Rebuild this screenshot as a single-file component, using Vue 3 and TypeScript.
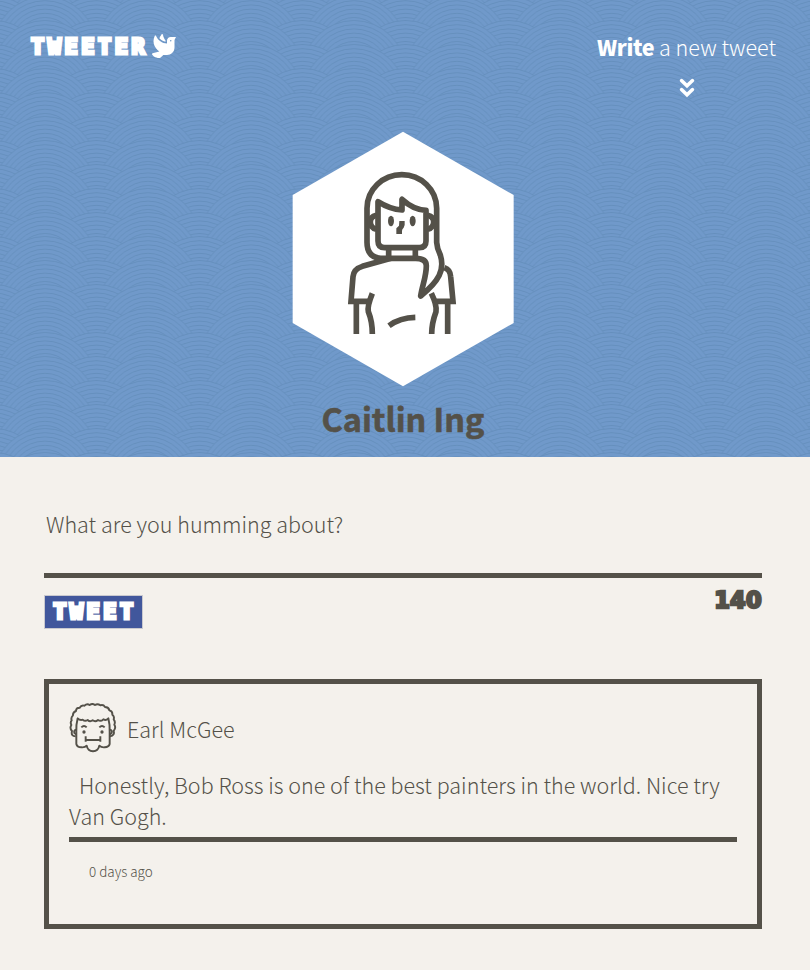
<script setup lang="ts">
import { ref, computed } from 'vue'

interface Tweet {
  author: string
  content: string
  age: string
}

const LIMIT = 140
const draft = ref<string>('')
const remaining = computed<number>(() => LIMIT - draft.value.length)
const tweets: Tweet[] = [
  {
    author: 'Earl McGee',
    content: 'Honestly, Bob Ross is one of the best painters in the world. Nice try Van Gogh.',
    age: '0 days ago',
  },
]

const PERIOD_X = 103
const PERIOD_Y = 24
const RINGS: number[] = [51.5, 47.3, 43.1, 38.9, 34.7, 30.5]

interface Arch {
  cx: number
  cy: number
}

const arches: Arch[] = []
for (let row = -1; row < 5; row++) {
  const cy = row * PERIOD_Y
  arches.push({ cx: 0, cy }, { cx: PERIOD_X, cy })
  arches.push({ cx: PERIOD_X / 2, cy })
}
</script>

<template>
  <div class="page">
    <header class="hero">
      <svg class="waves" width="100%" height="100%" aria-hidden="true">
        <defs>
          <pattern id="waves" x="-6.5" y="0" :width="PERIOD_X" :height="PERIOD_Y" patternUnits="userSpaceOnUse">
            <g v-for="(a, i) in arches" :key="i">
              <circle v-for="r in RINGS" :key="r" :cx="a.cx" :cy="a.cy" :r="r" />
            </g>
          </pattern>
        </defs>
        <rect width="100%" height="100%" fill="url(#waves)" />
      </svg>
      <nav class="nav">
        <div class="brand">
          <span class="brand-name">TWEETER</span>
          <svg class="dove" viewBox="0 0 512 512">
            <path d="M288 167.2v-28.1c-28.2-36.3-47.1-79.3-54.1-125.2-2.1-13.5-19-18.8-27.8-8.3-21.1 24.9-37.7 54.1-48.9 86.5 34.2 38.3 80 64.6 130.8 75.1zM400 64c-44.2 0-80 35.9-80 80.1v59.4C215.6 197.3 127 133 87 41.8c-5.5-12.5-23.2-13.2-29-.9C41.4 76 32 115.2 32 156.6c0 70.8 34.1 136.9 85.1 185.9 13.2 12.7 26.1 23.2 38.9 32.8l-143.9 36C1.4 414-3.4 426.4 2.6 435.7 20 462.6 63 508.2 155.8 512c8 .3 16-2.6 22.1-7.9l65.2-56.1H320c88.4 0 160-71.5 160-159.9V128l32-64H400zm0 96.1c-8.8 0-16-7.2-16-16s7.2-16 16-16 16 7.2 16 16-7.2 16-16 16z" />
          </svg>
        </div>
        <div class="compose-link">
          <span class="compose-text"><b>Write</b> a new tweet</span>
          <svg class="chevrons" viewBox="0 0 18 20">
            <path d="M3.5 2.6 9 7.8l5.5-5.2M3.5 11.6 9 16.8l5.5-5.2" />
          </svg>
        </div>
      </nav>
      <svg class="avatar" viewBox="0 0 720 810">
        <path class="hex" d="M354 20 686 210V594L354 784 23 594V210Z" />
        <g class="lines">
          <path d="M318 400H287Q246 397 246 352V250A104.5 101 0 0 1 455 250V352Q456 370 466 390C480 435 462 468 407 513C412 480 424 455 424 422Q424 400 392 400H310" />
          <path class="sharp" d="M318 400 232 424Q206 432 204 455L198 529H250" />
          <path class="sharp" d="M478 428Q496 434 497 455L504 529H452" />
          <path d="M214 529V627M488 529V627M262 505Q246 545 250 560Q262 590 262 627M439 505Q456 540 453 560Q440 595 440 627M312 602Q345 578 391 577" />
          <path d="M279 230V348Q279 368 299 368H403Q423 368 423 348V256Q385 254 351 223V255Q315 253 279 230Z" />
          <path d="M274 271Q256 275 256 291 256 308 274 313M428 271Q446 275 446 291 446 308 428 313M311 368V400M391 368V400" />
        </g>
        <path d="M343 288H359V300L356 308Q351 312 351 318V327H334V310L342 302Z" />
        <ellipse cx="318" cy="288" rx="9" ry="16" />
        <ellipse cx="383" cy="288" rx="9" ry="16" />
      </svg>
      <h1 class="name">Caitlin Ing</h1>
    </header>

    <main class="main">
      <form class="composer" @submit.prevent>
        <textarea v-model="draft" class="input" placeholder="What are you humming about?"></textarea>
        <div class="actions">
          <button class="submit" type="submit">TWEET</button>
          <output class="counter">{{ remaining }}</output>
        </div>
      </form>

      <article v-for="t in tweets" :key="t.author" class="tweet">
        <div class="tweet-head">
          <svg class="earl" viewBox="87 84 144 150">
            <path d="M107 184Q92 184 96 168Q88 160 94 150Q90 142 95 136Q92 128 99 121Q98 112 108 108Q108 98 119 98Q124 89 133 92Q141 85 149 90Q157 84 165 90Q173 85 181 91Q190 88 195 96Q206 96 208 106Q218 108 217 119Q224 124 221 133Q227 140 223 149Q229 158 221 168Q225 181 210 184" />
            <path d="M113 130Q108 149 109 170V207Q111 217 124 217Q135 218 140 212Q143 228 159 229Q175 228 178 212Q184 218 194 217Q207 216 209 207V170Q210 149 205 130Q198 138 190 133Q182 141 174 135Q166 142 158 136Q150 142 143 135Q135 140 128 134Q120 137 113 130Z" />
            <path d="M109 164Q101 166 103 174L109 178M209 164Q218 166 215 174L209 178M124 157Q132 149 140 157M178 157Q186 149 194 157M137 184V200M181 184V200M138 194Q159 196 180 194" />
            <circle cx="132" cy="171" r="5" />
            <circle cx="186" cy="171" r="5" />
          </svg>
          <span class="author">{{ t.author }}</span>
        </div>
        <p class="content">{{ t.content }}</p>
        <footer class="age">{{ t.age }}</footer>
      </article>
    </main>
  </div>
</template>

<style>
body {
  background: #f4f1ec;
}
</style>

<style scoped>
.page {
  width: 810px;
  height: 970px;
  overflow: hidden;
  background: #f4f1ec;
  color: #545149;
  font-family: "Noto Sans CJK JP", "Noto Sans", sans-serif;
  font-weight: 300;
  font-size: 21.53px;
}
.hero {
  position: relative;
  height: 457px;
  background: #7099ca;
  display: flex;
  flex-direction: column;
  align-items: center;
}
.waves {
  position: absolute;
  inset: 0;
}
.waves circle {
  fill: #7099ca;
  stroke: #638dbb;
  stroke-width: 0.9;
}
.nav,
.avatar,
.name {
  position: relative;
}
.nav {
  width: 100%;
  height: 125px;
  box-sizing: border-box;
  padding: 31px 34px 0 30px;
  display: flex;
  justify-content: space-between;
  align-items: flex-start;
  color: #fff;
}
.brand {
  display: flex;
  align-items: center;
  height: 30px;
}
.brand-name {
  width: 121px;
  padding: 1px 0 0 1px;
  font: 700 22px/28px "DejaVu Sans Mono", monospace;
  letter-spacing: 3.5px;
  -webkit-text-stroke: 3.2px currentColor;
}
.dove {
  width: 24px;
  height: 24px;
  fill: #fff;
}
.compose-link {
  display: flex;
  flex-direction: column;
  align-items: center;
}
.compose-text {
  line-height: 32px;
  white-space: nowrap;
}
.compose-text b {
  font-weight: 900;
  letter-spacing: -0.3px;
}
.chevrons {
  width: 18px;
  height: 20px;
  margin: 15px 0 0 1px;
  fill: none;
  stroke: #fff;
  stroke-width: 3.5;
  stroke-linecap: round;
}
.avatar {
  width: 240px;
  height: 270px;
  flex: none;
  fill: #545149;
}
.hex {
  fill: #fff;
}
.lines {
  fill: none;
  stroke: #545149;
  stroke-width: 17;
  stroke-linejoin: round;
}
.sharp {
  stroke-linejoin: miter;
}
.name {
  margin: -2px 4px 0 0;
  font-size: 32.4px;
  line-height: 50px;
  font-weight: 700;
  -webkit-text-stroke: 0.6px currentColor;
}
.main {
  padding: 38px 48px 0 44px;
}
.input {
  display: block;
  box-sizing: border-box;
  width: 100%;
  height: 83px;
  padding: 13px 2px 12px;
  border: 0;
  border-bottom: 5px solid #545149;
  outline: 0;
  resize: none;
  background: transparent;
  color: inherit;
  font: inherit;
  line-height: 32px;
  overflow: hidden;
}
.input::placeholder {
  color: #545149;
}
.actions {
  display: flex;
  justify-content: space-between;
  align-items: flex-start;
  height: 101px;
}
.submit {
  width: 99px;
  height: 34px;
  margin: 17px 0 0;
  padding: 0 0 0 3px;
  border: 1px solid #c9c9cf;
  background: #41579c;
  color: #fff;
  font: 700 22px/30px "DejaVu Sans Mono", monospace;
  letter-spacing: 3.5px;
  -webkit-text-stroke: 3.2px currentColor;
}
.counter {
  margin-top: 8px;
  font: 700 22.5px/28px "DejaVu Sans", sans-serif;
  letter-spacing: 0.3px;
  -webkit-text-stroke: 2.4px currentColor;
}
.tweet {
  box-sizing: border-box;
  height: 250px;
  border: 5px solid #545149;
  padding: 19px 20px;
}
.tweet-head {
  display: flex;
  align-items: center;
  height: 50px;
  gap: 10px;
}
.earl {
  width: 48px;
  height: 50px;
  fill: none;
  stroke: #545149;
  stroke-width: 5.8;
  stroke-linejoin: round;
}
.earl circle {
  fill: #545149;
  stroke: none;
}
.author {
  padding-top: 2px;
  line-height: 32px;
}
.content {
  margin: 16px 0 0;
  padding-bottom: 6px;
  border-bottom: 5px solid #545149;
  line-height: 31px;
  text-indent: 10px;
}
.age {
  padding: 19px 20px;
  font-size: 13.45px;
  line-height: 20px;
}
</style>
